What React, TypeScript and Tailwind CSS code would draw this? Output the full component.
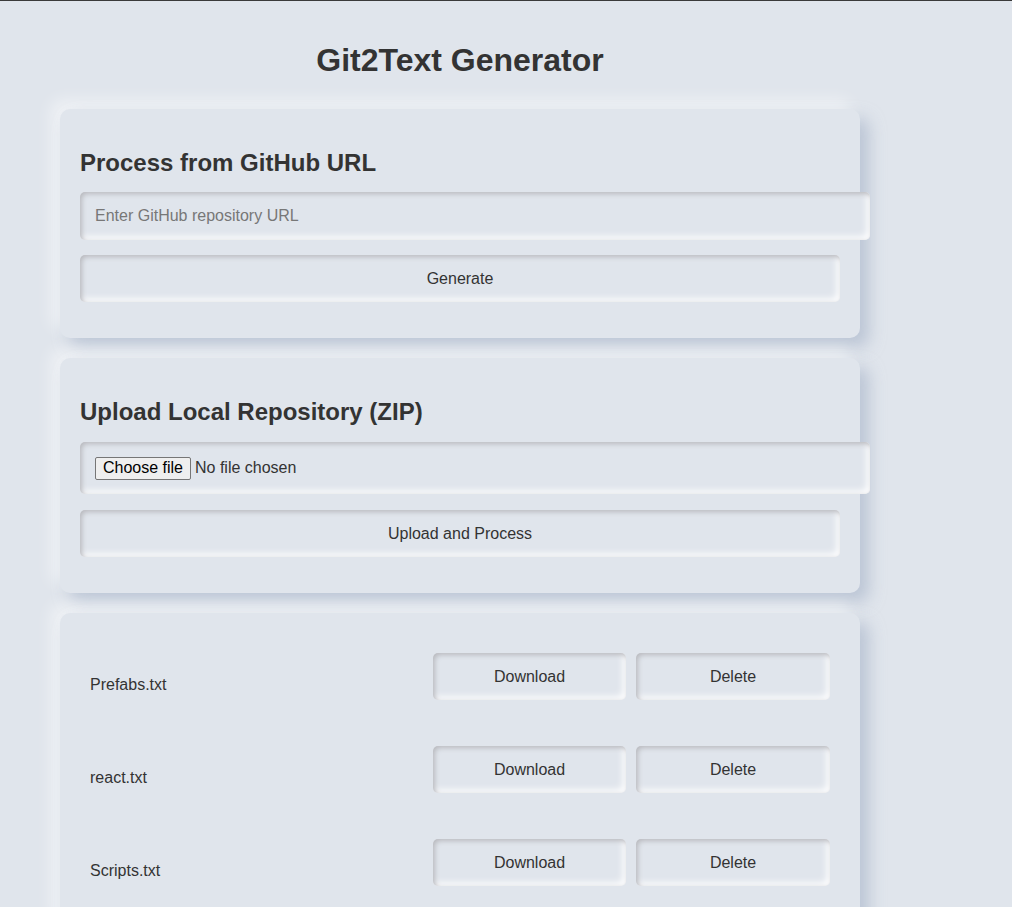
const card =
  "w-[800px] rounded-[10px] bg-[#e0e5ec] px-[20px] shadow-[9px_9px_16px_rgba(163,177,198,0.6),-9px_-9px_16px_rgba(255,255,255,0.5)]";

const inset =
  "rounded-[5px] bg-[#e0e5ec] shadow-[inset_2px_2px_5px_#b8b9be,inset_-3px_-3px_7px_#ffffff]";

const files = ["Prefabs.txt", "react.txt", "Scripts.txt"];

export default function App() {
  return (
    <div className="min-h-screen border-t border-[#3a3a3a] bg-[#e0e5ec] pl-[60px] pt-[41px] pb-[40px] font-['Liberation_Sans',Arial,sans-serif] text-[#333]">
      <h1 className="w-[800px] text-center text-[32px] font-bold leading-[37px]">
        Git2Text Generator
      </h1>

      <div className={`${card} mt-[30px] pt-[20px] pb-[36px]`}>
        <h2 className="mt-[20px] text-[24px] font-bold leading-[28px]">
          Process from GitHub URL
        </h2>
        <input
          type="text"
          placeholder="Enter GitHub repository URL"
          className={`${inset} mt-[15px] box-content block h-[18px] w-full px-[15px] py-[15px] text-[16px] text-[#333] outline-none placeholder:text-[#777]`}
        />
        <button className={`${inset} mt-[15px] block h-[47px] w-full text-[16px]`}>
          Generate
        </button>
      </div>

      <div className={`${card} mt-[20px] pt-[20px] pb-[36px]`}>
        <h2 className="mt-[20px] text-[24px] font-bold leading-[28px]">
          Upload Local Repository (ZIP)
        </h2>
        <label className={`${inset} mt-[16px] box-content flex h-[22px] w-full items-center px-[15px] py-[15px] text-[16px]`}>
          <input type="file" className="hidden" />
          <span className="flex h-[23px] w-[96px] items-center justify-center rounded-[2px] border border-[#767676] bg-[#efefef] text-black">
            Choose file
          </span>
          <span className="ml-[4px]">No file chosen</span>
        </label>
        <button className={`${inset} mt-[16px] block h-[47px] w-full text-[16px]`}>
          Upload and Process
        </button>
      </div>

      <div className={`${card} mt-[20px] py-[20px]`}>
        {files.map((f) => (
          <div key={f} className="flex h-[93px] items-start justify-between px-[10px] pt-[20px]">
            <span className="pt-[23px] text-[16px] leading-[18px]">{f}</span>
            <div className="flex gap-[10px]">
              <button className={`${inset} h-[47px] w-[193px] text-[16px]`}>Download</button>
              <button className={`${inset} h-[47px] w-[194px] text-[16px]`}>Delete</button>
            </div>
          </div>
        ))}
      </div>
    </div>
  );
}
